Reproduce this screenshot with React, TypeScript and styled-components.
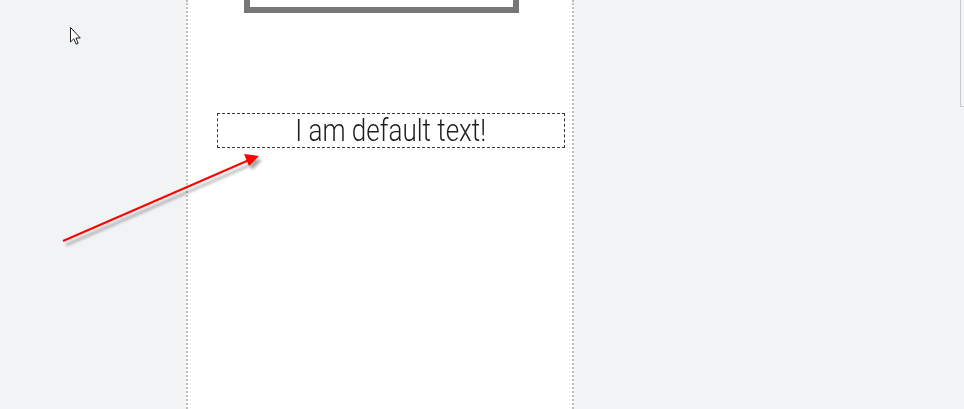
import * as React from 'react';
import styled, { createGlobalStyle } from 'styled-components';

const GlobalStyle = createGlobalStyle`
  html, body {
    margin: 0;
    padding: 0;
    background: #f2f3f5;
    font-family: "Liberation Sans", Arial, sans-serif;
    overflow: hidden;
  }
`;

const Page = styled.div`
  position: relative;
  display: flex;
  width: 964px;
  height: 409px;
  background: #f2f3f5;
  overflow: hidden;
`;

const Gutter = styled.div`
  width: 186px;
  flex-shrink: 0;
`;

const Canvas = styled.div`
  width: 384px;
  flex-shrink: 0;
  background: #ffffff;
  border-left: 2px dotted #bdbdbd;
  border-right: 2px dotted #bdbdbd;
  display: flex;
  flex-direction: column;
`;

const Frame = styled.div`
  align-self: flex-start;
  margin-left: 56px;
  width: 263px;
  height: 7px;
  border: 6px solid #777777;
  border-top: none;
  background: #ffffff;
`;

const TextBox = styled.div`
  margin-top: 100px;
  margin-left: 29px;
  width: 346px;
  height: 33px;
  border: 1px dashed #3a3a3a;
  display: flex;
  align-items: center;
  justify-content: center;
`;

const Label = styled.span`
  display: inline-block;
  font-family: Roboto, "Liberation Sans", sans-serif;
  font-weight: 300;
  font-size: 31px;
  line-height: 33px;
  color: #1e1e1e;
  transform: scaleX(0.84);
  white-space: nowrap;
`;

const Side = styled.div`
  flex: 1;
  display: flex;
  justify-content: flex-end;
`;

const ScrollTrack = styled.div`
  width: 3px;
  height: 106px;
  border-left: 1px solid #c9c9c9;
  border-bottom: 1px solid #c9c9c9;
`;

const Overlay = styled.svg`
  position: absolute;
  left: 0;
  top: 0;
  pointer-events: none;
`;

const App: React.FC = () => (
  <>
    <GlobalStyle />
    <Page>
      <Gutter />
      <Canvas>
        <Frame />
        <TextBox>
          <Label>I am default text!</Label>
        </TextBox>
      </Canvas>
      <Side>
        <ScrollTrack />
      </Side>
      <Overlay width={964} height={409}>
        <defs>
          <filter id="sh" x="-20%" y="-50%" width="140%" height="200%">
            <feGaussianBlur in="SourceAlpha" stdDeviation="1.6" />
            <feOffset dx="3" dy="4" result="b" />
            <feComponentTransfer>
              <feFuncA type="linear" slope="0.35" />
            </feComponentTransfer>
            <feMerge>
              <feMergeNode />
              <feMergeNode in="SourceGraphic" />
            </feMerge>
          </filter>
        </defs>
        <g filter="url(#sh)">
          <line x1={63} y1={241} x2={248} y2={160.5} stroke="#ff0000" strokeWidth={2} />
          <polygon points="259,156 244,154 249,166" fill="#ff0000" />
        </g>
        <path
          d="M70.5 27.5 L70.5 42 L73.8 38.8 L76.2 44.2 L78.2 43.3 L75.9 38 L80.3 38 Z"
          fill="#ffffff"
          stroke="#222"
          strokeWidth={1}
          strokeLinejoin="round"
        />
      </Overlay>
    </Page>
  </>
);

export default App;
